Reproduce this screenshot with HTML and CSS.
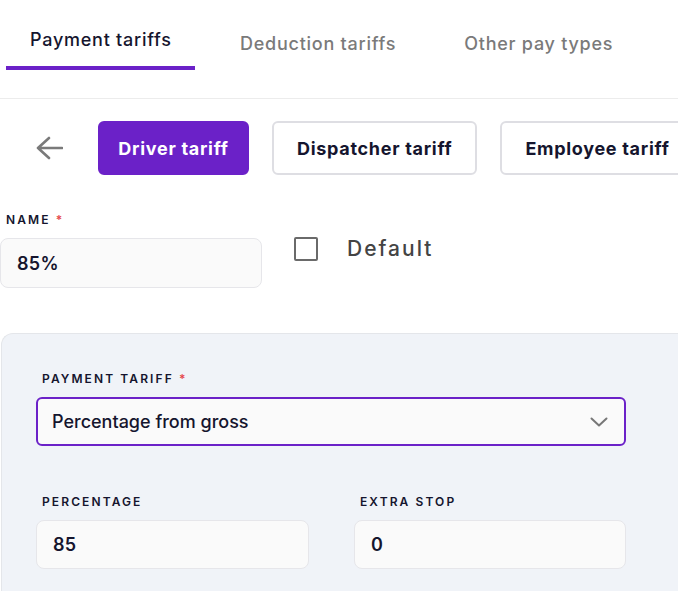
FILE: index.html
```html
<!DOCTYPE html>
<html>
<head>
<meta charset="utf-8">
<link rel="stylesheet" href="styles.css">
</head>
<body>
<div class="page">
  <nav class="tabs">
    <div class="tab active">Payment tariffs</div>
    <div class="tab">Deduction tariffs</div>
    <div class="tab">Other pay types</div>
  </nav>
  <div class="toolbar">
    <button class="back" aria-label="Back">
      <svg width="28" height="24" viewBox="0 0 28 24"><path d="M14 2 L3 12 L14 22 M3 12 H27" fill="none" stroke="#7a7a7a" stroke-width="2.6" stroke-linecap="round" stroke-linejoin="round"/></svg>
    </button>
    <button class="seg primary">Driver tariff</button>
    <button class="seg">Dispatcher tariff</button>
    <button class="seg">Employee tariff</button>
  </div>
  <div class="name-row">
    <div class="field name-field">
      <label class="label">NAME <span class="req">*</span></label>
      <div class="input">85%</div>
    </div>
    <label class="check">
      <span class="box"></span>
      <span class="check-text">Default</span>
    </label>
  </div>
  <section class="panel">
    <div class="field">
      <label class="label">PAYMENT TARIFF <span class="req">*</span></label>
      <div class="input select">
        <span>Percentage from gross</span>
        <svg width="18" height="10" viewBox="0 0 18 10"><path d="M1.5 1.5 L9 8.5 L16.5 1.5" fill="none" stroke="#777" stroke-width="2" stroke-linecap="round" stroke-linejoin="round"/></svg>
      </div>
    </div>
    <div class="grid">
      <div class="field">
        <label class="label">PERCENTAGE</label>
        <div class="input">85</div>
      </div>
      <div class="field">
        <label class="label">EXTRA STOP</label>
        <div class="input">0</div>
      </div>
    </div>
  </section>
</div>
</body>
</html>
```
FILE: styles.css
```css
* { box-sizing: border-box; }
html, body { margin: 0; padding: 0; background: #fff; }
body {
  font-family: "Inter", "Noto Sans", sans-serif;
  color: #15152e;
  width: 678px;
  height: 591px;
  overflow: hidden;
}
.page { width: 678px; }
.tabs {
  display: flex;
  height: 99px;
  border-bottom: 1px solid #ececec;
  padding-left: 6px;
}
.tab {
  font-size: 18px;
  font-weight: 500;
  color: #7a7a7a;
  padding-top: 33px;
  height: 70px;
  letter-spacing: 0.75px;
  white-space: nowrap;
}
.tab.active {
  color: #15152e;
  width: 189px;
  padding-left: 24px;
  border-bottom: 4px solid #6b21c8;
  padding-top: 29px;
}
.tab:nth-child(2) { margin-left: 45px; }
.tab:nth-child(3) { margin-left: 68px; }

.toolbar {
  display: flex;
  align-items: center;
  margin-top: 22px;
  height: 54px;
  gap: 23px;
}
.back {
  background: none;
  border: 0;
  padding: 0;
  margin-left: 35px;
  margin-right: 12px;
  width: 28px;
  height: 24px;
  display: flex;
}
.seg {
  font-family: inherit;
  height: 54px;
  padding: 0 23px;
  font-size: 18px;
  font-weight: 700;
  letter-spacing: 0.7px;
  color: #15152e;
  background: #fff;
  border: 2px solid #dedee3;
  border-radius: 6px;
  white-space: nowrap;
  flex-shrink: 0;
}
.seg.primary {
  background: #6b21c8;
  border-color: #6b21c8;
  color: #fff;
  width: 151px;
  padding: 0;
}
.name-row {
  display: flex;
  align-items: flex-start;
  margin-top: 38px;
}
.field { display: flex; flex-direction: column; }
.label {
  font-size: 12px;
  font-weight: 600;
  letter-spacing: 2.1px;
  color: #15152e;
  height: 25px;
  line-height: 14px;
  padding-left: 6px;
}
.req { color: #e5484d; }
.input {
  height: 50px;
  border: 1px solid #e6e6ea;
  border-radius: 8px;
  background: #fafafa;
  font-size: 18px;
  font-weight: 600;
  letter-spacing: 0.3px;
  display: flex;
  align-items: center;
  padding-left: 16px;
}
.name-field { width: 262px; }
.check {
  display: flex;
  align-items: center;
  margin-left: 32px;
  margin-top: 24px;
}
.box {
  width: 24px;
  height: 24px;
  border: 2.5px solid #6a6a6a;
  border-radius: 2px;
}
.check-text {
  margin-left: 29px;
  font-size: 21px;
  font-weight: 500;
  letter-spacing: 2px;
  color: #444;
  margin-top: -1px;
}
.panel {
  margin-top: 45px;
  margin-left: 1px;
  background: #f0f3f8;
  border-top: 1px solid #e4e6ea;
  border-left: 1px solid #e4e6ea;
  border-top-left-radius: 12px;
  padding: 38px 52px 30px 34px;
  height: 260px;
}
.select {
  border: 2px solid #6b21c8;
  border-radius: 6px;
  height: 49px;
  width: 590px;
  justify-content: space-between;
  padding-left: 14px;
  padding-right: 16px;
  font-weight: 500;
  letter-spacing: 0;
}
.grid {
  display: grid;
  grid-template-columns: 273px 272px;
  column-gap: 45px;
  margin-top: 49px;
}
.grid .input { height: 49px; }
```
